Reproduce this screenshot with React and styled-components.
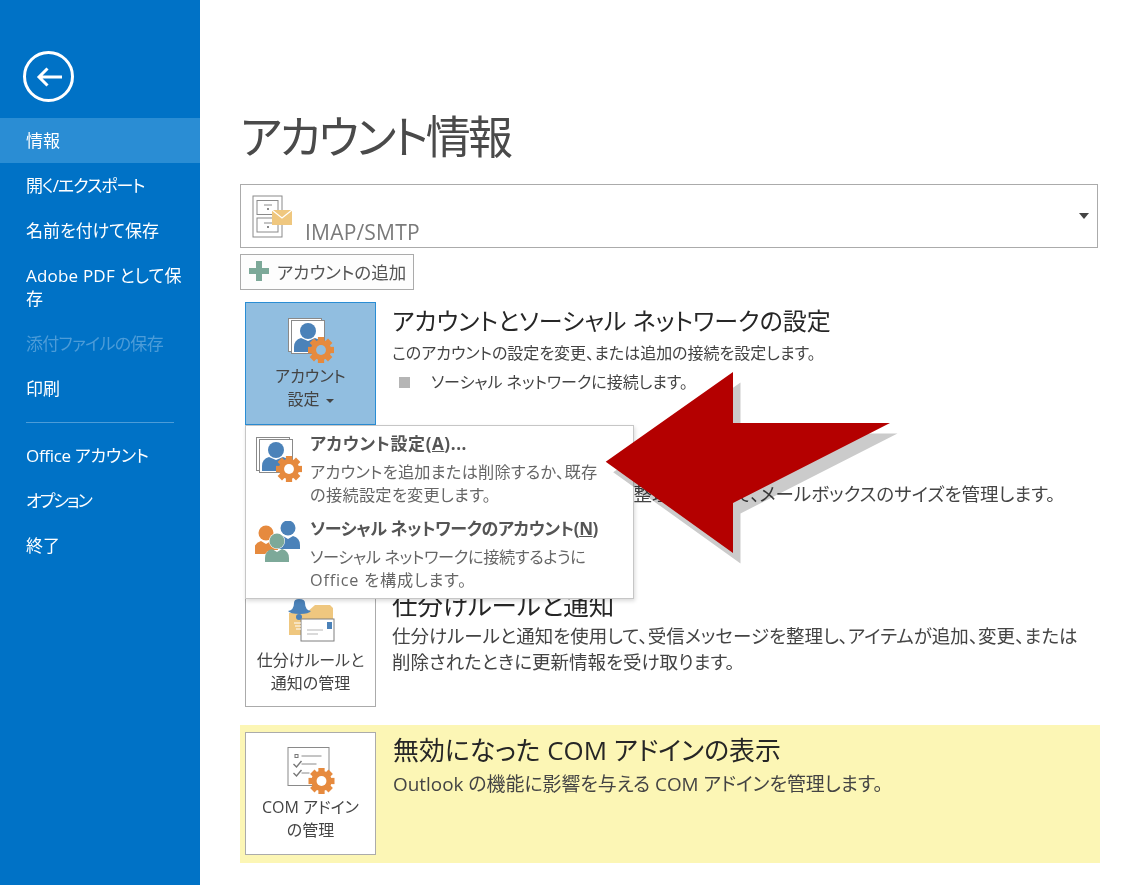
import React from 'react';
import styled, { createGlobalStyle } from 'styled-components';

const GlobalStyle = createGlobalStyle`
  html, body {
    margin: 0;
    padding: 0;
    background: #ffffff;
    overflow: hidden;
  }
  body {
    font-family: "Open Sans", "Noto Sans CJK JP", sans-serif;
    font-feature-settings: "palt";
    color: #444444;
  }
`

const navItems = [
  { label: '情報', active: true },
  { label: '開く/エクスポート', spacing: -1 },
  { label: '名前を付けて保存' },
  { label: 'Adobe PDF として保存', spacing: 0.2 },
  { label: '添付ファイルの保存', spacing: -0.7, disabled: true },
  { label: '印刷' },
  { divider: true },
  { label: 'Office アカウント', spacing: -0.3 },
  { label: 'オプション', spacing: -2 },
  { label: '終了' },
];

const Gear = ({ x, y, r, fill = '#E68A3E', hole = '#ffffff' }) => (
  <g>
    {[0, 45, 90, 135, 180, 225, 270, 315].map((a) => (
      <rect
        key={a}
        x={x - r * 0.24}
        y={y - r}
        width={r * 0.48}
        height={r * 0.5}
        fill={fill}
        transform={`rotate(${a} ${x} ${y})`}
      />
    ))}
    <circle cx={x} cy={y} r={r * 0.78} fill={fill} />
    <circle cx={x} cy={y} r={r * 0.38} fill={hole} />
  </g>
);

const Person = ({ x, y, fill }) => (
  <g fill={fill}>
    <circle cx={x} cy={y} r={7.5} />
    <path d={`M${x - 12} ${y + 21} v-4 q0 -7 7 -9 l5 3 l5 -3 q7 2 7 9 v4 z`} />
  </g>
);

const AccountIcon = ({ hole = '#91BEE0' }) => (
  <svg width="48" height="48" viewBox="0 0 48 48">
    <rect x="1.5" y="1.5" width="33" height="33" fill="#ffffff" stroke="#8a8a8a" />
    <rect x="4.5" y="3.5" width="33" height="33" fill="#ffffff" stroke="#8a8a8a" />
    <circle cx="21" cy="14" r="8" fill="#4B82B9" />
    <path d="M7 35 v-5 q0 -7 7 -9 l7 3 l7 -3 q7 2 7 9 v5 z" fill="#4B82B9" />
    <Gear x={34} y={33} r={13} hole={hole} />
  </svg>
);

const SocialIcon = () => (
  <svg width="46" height="46" viewBox="0 0 46 46">
    <Person x={33} y={7} fill="#4B82B9" />
    <Person x={11} y={12} fill="#E68A3E" />
    <circle cx="22" cy="20" r="8" fill="#ffffff" />
    <path d="M9 42 v-5 q0 -6 8 -8 h10 q8 2 8 8 v5 z" fill="#ffffff" />
    <Person x={22} y={20} fill="#7DA999" />
  </svg>
);

const RulesIcon = () => (
  <svg width="50" height="50" viewBox="0 0 50 50">
    <path d="M3 14 h17 l9 -8 h15 l3 3 v27 h-44 z" fill="#EFC77F" />
    <path d="M2 12 q6 -1 6 -8 q0 -4 5 -4 q6 0 6 4 q0 7 6 8 q-2 3 -11 3 q-10 0 -12 -3 z" fill="#4B82B9" />
    <circle cx="13" cy="18" r="3" fill="#4B82B9" />
    <rect x="15" y="20" width="33" height="22" fill="#ffffff" stroke="#7f7f7f" />
    <rect x="41" y="23" width="5" height="7" fill="#4B82B9" />
    <path d="M21 31 h16 M21 35 h11" stroke="#b5b5b5" />
    <path d="M8 24 h7 M9 27 h6 M10 30 h5" stroke="#ffffff" />
  </svg>
);

const ComIcon = () => (
  <svg width="52" height="50" viewBox="-1.5 0 52 50">
    <rect x="1.5" y="1.5" width="41" height="38" fill="#ffffff" stroke="#8a8a8a" />
    <rect x="8.5" y="8.5" width="3" height="3" fill="none" stroke="#777777" />
    <path d="M15 10 h20 M15 18 h15 M15 27 h8" stroke="#8a8a8a" />
    <path d="M7 18 l3 3 l5 -6 M7 27 l3 3 l5 -6" fill="none" stroke="#777777" strokeWidth="1.4" />
    <Gear x={35} y={35} r={13} />
  </svg>
);

const CabinetIcon = () => (
  <svg width="42" height="44" viewBox="0 0 42 44">
    <rect x="1" y="1" width="29" height="41" fill="#ffffff" stroke="#8a8a8a" />
    <rect x="5" y="5.5" width="21" height="14" fill="#ffffff" stroke="#8a8a8a" />
    <rect x="5" y="23" width="21" height="14" fill="#ffffff" stroke="#8a8a8a" />
    <path d="M12 10 h8 M12 28 h8" stroke="#8a8a8a" />
    <rect x="15" y="13" width="2" height="2" fill="#8a8a8a" />
    <rect x="15" y="31" width="2" height="2" fill="#8a8a8a" />
    <rect x="20" y="15" width="20" height="15" fill="#EFC77F" />
    <path d="M20 15 l10 8 l10 -8" fill="none" stroke="#ffffff" strokeWidth="1.2" />
  </svg>
);

const ARROW_PATH = 'M5.7 101.7 L133 12 V63 H290 L133 143 V193 Z';

const App = () => {
  return (
    <Page>
      <GlobalStyle />
      <Sidebar>
        <BackArea>
          <BackButton>
            <svg width="30" height="26" viewBox="0 0 30 26">
              <path d="M28 13 H5 M13.5 4.5 L5 13 L13.5 21.5" fill="none" stroke="#ffffff" strokeWidth="3" />
            </svg>
          </BackButton>
        </BackArea>
        {navItems.map((item, index) =>
          item.divider ? (
            <NavDivider key={index} />
          ) : (
            <NavItem key={index} $active={item.active} $disabled={item.disabled} $spacing={item.spacing}>
              {item.label}
            </NavItem>
          )
        )}
      </Sidebar>

      <Main>
        <Title>アカウント情報</Title>
        <AccountSelect>
          <CabinetIcon />
          <AccountType>IMAP/SMTP</AccountType>
          <Caret />
        </AccountSelect>
        <AddButton>
          <svg width="20" height="20" viewBox="0 0 20 20">
            <path d="M7 0 h6 v7 h7 v6 h-7 v7 h-6 v-7 h-7 v-6 h7 z" fill="#7DA999" />
          </svg>
          アカウントの追加
        </AddButton>

        <Sections>
          <Section>
            <BigButton $selected $bottom={13}>
              <AccountIcon />
              <ButtonLabel>
                アカウント
                <br />
                設定 <SmallCaret />
              </ButtonLabel>
            </BigButton>
            <SectionBody>
              <SectionTitle>アカウントとソーシャル ネットワークの設定</SectionTitle>
              <SectionText>このアカウントの設定を変更、または追加の接続を設定します。</SectionText>
              <BulletRow>ソーシャル ネットワークに接続します。</BulletRow>
            </SectionBody>
          </Section>

          <Section>
            <BigButton>
              <ButtonLabel>ツール</ButtonLabel>
            </BigButton>
            <SectionBody>
              <SectionTitle $large>メールボックスの整理</SectionTitle>
              <SectionText $large>削除済みアイテムを空にしたり整理したりして、メールボックスのサイズを管理します。</SectionText>
            </SectionBody>
          </Section>

          <Section $short>
            <BigButton $bottom={11}>
              <RulesIcon />
              <ButtonLabel>
                仕分けルールと
                <br />
                通知の管理
              </ButtonLabel>
            </BigButton>
            <SectionBody>
              <SectionTitle $large>仕分けルールと通知</SectionTitle>
              <SectionText $large>
                仕分けルールと通知を使用して、受信メッセージを整理し、アイテムが追加、変更、または
                <br />
                削除されたときに更新情報を受け取ります。
              </SectionText>
            </SectionBody>
          </Section>
        </Sections>

        <YellowSection>
          <BigButton>
            <ComIcon />
            <ButtonLabel>
              COM アドイン
              <br />
              の管理
            </ButtonLabel>
          </BigButton>
          <SectionBody>
            <SectionTitle $large>無効になった COM アドインの表示</SectionTitle>
            <SectionText $large>Outlook の機能に影響を与える COM アドインを管理します。</SectionText>
          </SectionBody>
        </YellowSection>

        <Menu>
          <MenuItem>
            <MenuIcon>
              <AccountIcon hole="#ffffff" />
            </MenuIcon>
            <div>
              <MenuTitle $spacing={0.6}>
                アカウント設定(<u>A</u>)...
              </MenuTitle>
              <MenuText>
                <MenuLine $spacing={0.25}>アカウントを追加または削除するか、既存</MenuLine>
                <MenuLine $spacing={0.3}>の接続設定を変更します。</MenuLine>
              </MenuText>
            </div>
          </MenuItem>
          <MenuItem>
            <MenuIcon>
              <SocialIcon />
            </MenuIcon>
            <div>
              <MenuTitle $spacing={-0.35}>
                ソーシャル ネットワークのアカウント(<u>N</u>)
              </MenuTitle>
              <MenuText>
                <MenuLine $spacing={-0.35}>ソーシャル ネットワークに接続するように</MenuLine>
                <MenuLine $spacing={0.8}>Office を構成します。</MenuLine>
              </MenuText>
            </div>
          </MenuItem>
        </Menu>

        <ArrowShadow width="300" height="210" viewBox="0 0 300 210">
          <path d={ARROW_PATH} fill="#CBCBCB" transform="translate(7.5 10.5)" />
        </ArrowShadow>
        <Arrow width="300" height="210" viewBox="0 0 300 210">
          <path d={ARROW_PATH} fill="#B40000" />
        </Arrow>
      </Main>
    </Page>
  );
};

const Page = styled.div`
  display: flex;
  width: 1131px;
  height: 885px;
  overflow: hidden;
`
const Sidebar = styled.nav`
  width: 200px;
  flex-shrink: 0;
  background: #0072c6;
  color: #ffffff;
`
const BackArea = styled.div`
  height: 118px;
  padding: 51px 0 0 23px;
  box-sizing: border-box;
`
const BackButton = styled.div`
  width: 51px;
  height: 51px;
  box-sizing: border-box;
  border: 3px solid #ffffff;
  border-radius: 50%;
  display: flex;
  align-items: center;
  justify-content: center;
`
const NavItem = styled.div`
  padding: 11px 12px 11px 26px;
  font-size: 17px;
  line-height: 23px;
  letter-spacing: ${(p) => p.$spacing || 0}px;
  background: ${(p) => (p.$active ? '#2a8dd4' : 'transparent')};
  color: ${(p) => (p.$disabled ? '#4c9cd8' : '#ffffff')};
`
const NavDivider = styled.div`
  height: 1px;
  margin: 11px 26px 10px 26px;
  background: #4c9cd8;
`
const Main = styled.main`
  position: relative;
  flex: 1;
  padding-left: 40px;
`
const Title = styled.h1`
  margin: 0;
  height: 184px;
  padding-top: 105px;
  box-sizing: border-box;
  font-size: 45px;
  line-height: 64px;
  font-weight: 400;
  letter-spacing: -2.6px;
  color: #4a4a4a;
`
const AccountSelect = styled.div`
  position: relative;
  width: 858px;
  height: 64px;
  box-sizing: border-box;
  border: 1px solid #ababab;
  padding: 10px 0 0 11px;
  display: flex;
  align-items: flex-start;
`
const AccountType = styled.span`
  margin: 24px 0 0 11px;
  font-size: 21px;
  line-height: 26px;
  letter-spacing: 0.2px;
  color: #7a7a7a;
`
const Caret = styled.span`
  position: absolute;
  right: 8px;
  top: 28px;
  border-left: 5px solid transparent;
  border-right: 5px solid transparent;
  border-top: 6px solid #444444;
`
const AddButton = styled.div`
  width: 174px;
  height: 36px;
  margin-top: 6px;
  padding: 0 0 2px 8px;
  box-sizing: border-box;
  border: 1px solid #ababab;
  background: #fdfdfd;
  display: flex;
  align-items: center;
  gap: 8px;
  font-size: 17.5px;
  color: #555555;
`
const Sections = styled.div`
  margin: 12px 0 0 5px;
  display: flex;
  flex-direction: column;
  gap: 19px;
`
const Section = styled.section`
  display: flex;
  gap: 16px;
  height: ${(p) => (p.$short ? '121px' : '123px')};
`
const BigButton = styled.div`
  width: 131px;
  flex-shrink: 0;
  box-sizing: border-box;
  border: 1px solid ${(p) => (p.$selected ? '#2a8dd4' : '#ababab')};
  background: ${(p) => (p.$selected ? '#91bee0' : '#ffffff')};
  display: flex;
  flex-direction: column;
  align-items: center;
  justify-content: flex-end;
  padding-bottom: ${(p) => p.$bottom || 12}px;
`
const ButtonLabel = styled.div`
  font-size: 16px;
  line-height: 23px;
  text-align: center;
  color: #444444;
`
const SmallCaret = styled.span`
  display: inline-block;
  vertical-align: middle;
  margin-left: 2px;
  border-left: 4px solid transparent;
  border-right: 4px solid transparent;
  border-top: 4px solid #444444;
`
const SectionBody = styled.div`
  padding-top: 2px;
`
const SectionTitle = styled.h2`
  margin: 0 0 2px 0;
  font-size: ${(p) => (p.$large ? '25.5px' : '24px')};
  line-height: 34px;
  font-weight: 400;
  color: #262626;
`
const SectionText = styled.p`
  margin: ${(p) => (p.$large ? '-1px' : '0')} 0 0 0;
  font-size: ${(p) => (p.$large ? '18.5px' : '16px')};
  line-height: 26px;
  color: #444444;
`
const YellowSection = styled.section`
  display: flex;
  gap: 16px;
  width: 860px;
  height: 138px;
  margin-top: 18px;
  padding: 7px 0 8px 5px;
  box-sizing: border-box;
  background: #fcf6b5;
  ${SectionBody} {
    padding: 1px 0 0 1px;
  }
  ${SectionTitle} {
    font-size: 25.9px;
  }
  ${SectionText} {
    margin-top: 4px;
    font-size: 18.9px;
  }
`
const BulletRow = styled.div`
  display: flex;
  align-items: center;
  font-size: 16px;
  line-height: 26px;
  color: #444444;
  padding: 3px 0 0 7px;
  &::before {
    content: '';
    width: 11px;
    height: 11px;
    margin-right: 21px;
    background: #b5b5b5;
  }
`
const Menu = styled.div`
  position: absolute;
  left: 45px;
  top: 425px;
  width: 389px;
  height: 174px;
  box-sizing: border-box;
  border: 1px solid #c6c6c6;
  background: #ffffff;
  box-shadow: 1px 2px 4px rgba(0, 0, 0, 0.15);
  padding-top: 5px;
`
const MenuItem = styled.div`
  display: flex;
  height: 85px;
`
const MenuIcon = styled.div`
  width: 64px;
  flex-shrink: 0;
  padding: 5px 0 0 9px;
  box-sizing: border-box;
`
const MenuTitle = styled.div`
  font-size: 17px;
  line-height: 26px;
  font-weight: 700;
  letter-spacing: ${(p) => p.$spacing || 0}px;
  color: #555555;
`
const MenuText = styled.div`
  margin-top: 4px;
  font-size: 16.2px;
  line-height: 23px;
  color: #666666;
`
const MenuLine = styled.div`
  letter-spacing: ${(p) => p.$spacing || 0}px;
  white-space: nowrap;
`
const Arrow = styled.svg`
  position: absolute;
  left: 400px;
  top: 360px;
`
const ArrowShadow = styled(Arrow)`
  mix-blend-mode: multiply;
`

export default App;
